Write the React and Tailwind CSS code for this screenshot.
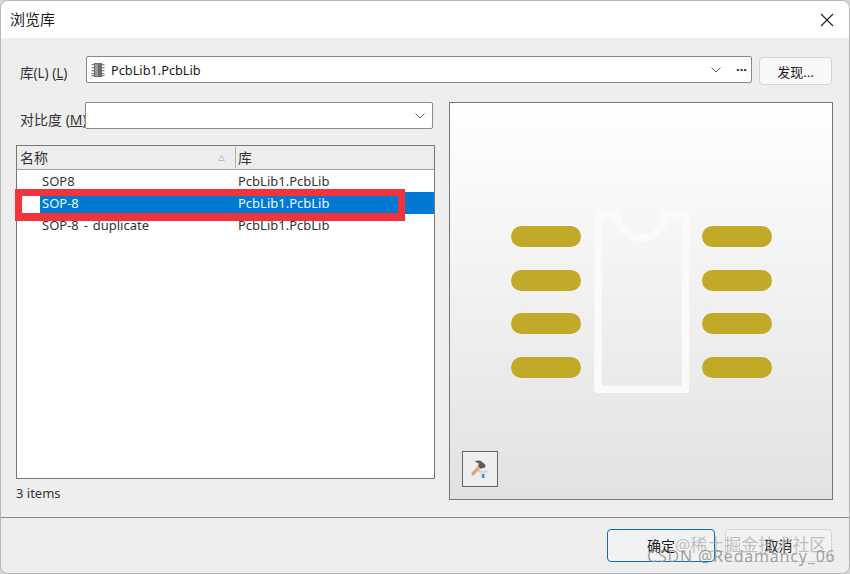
import React from "react";

const font = { fontFamily: '"Noto Sans", "Noto Sans CJK SC", sans-serif' };

function Chevron() {
  return (
    <svg width="10" height="6" viewBox="0 0 10 6" fill="none" stroke="#555" strokeWidth="1">
      <path d="M0.5 0.5 L5 5 L9.5 0.5" />
    </svg>
  );
}

function ChipIcon() {
  return (
    <svg width="14" height="16" viewBox="0 0 14 16">
      <rect x="3" y="1" width="8" height="14" fill="#6b6b6b" />
      <rect x="4" y="2" width="3" height="12" fill="#9a9a9a" />
      {[2, 5, 8, 11, 13].map((y) => (
        <g key={y}>
          <rect x="0.5" y={y} width="2.5" height="1.3" fill="#888" />
          <rect x="11" y={y} width="2.5" height="1.3" fill="#888" />
        </g>
      ))}
    </svg>
  );
}

function HammerIcon() {
  return (
    <svg width="18" height="18" viewBox="0 0 18 18">
      <path d="M0.5 13.5 L2 15.5 L9.5 8 L7.5 6 Z" fill="#e6a56e" stroke="#c07d4a" strokeWidth="0.5" />
      <path d="M3.5 1.5 Q7 0 10 1 L14.5 5 L14 8 L12.5 7.5 L10 9 L7 5.5 L8 3.8 Q6 2.4 3.5 1.5 Z" fill="#5c5c5c" />
      <path d="M7.5 11 H16.5 L13.5 13.5 V18 H10.8 V13.5 Z" fill="#dde4ec" stroke="#a9b8c8" strokeWidth="0.5" />
      <rect x="11" y="14" width="2.3" height="4" fill="#4d8fd0" />
    </svg>
  );
}

function SortMark() {
  return (
    <svg width="7" height="6" viewBox="0 0 7 6" fill="none" stroke="#b5b5b5" strokeWidth="0.8">
      <path d="M3.5 0.5 L6.5 5.5 H0.5 Z" />
    </svg>
  );
}

function Footprint() {
  const ys = [0, 44, 87, 131];
  return (
    <svg width="261" height="183" viewBox="0 0 261 183" fill="none">
      {ys.map((y) => (
        <g key={y}>
          <rect x="0" y={y + 16} width="70" height="21" rx="10.5" fill="#c2a928" />
          <rect x="191" y={y + 16} width="70" height="21" rx="10.5" fill="#c2a928" />
        </g>
      ))}
      <path
        d="M87 4 H106 A23 23 0 0 0 154 4 H174.5 V179.5 H87 Z"
        stroke="#fafafa"
        strokeWidth="7.5"
        strokeLinejoin="round"
      />
    </svg>
  );
}

function Row({ name, lib, selected }) {
  return (
    <div className={`flex h-[22px] items-center pt-[2px] text-[13px] ${selected ? "bg-[#0078d4] text-[#f2f8fd]" : "text-[#333333]"}`}>
      <div className="w-[219px] pl-[25px] whitespace-nowrap [word-spacing:1.5px]">{name}</div>
      <div className="flex-1 pl-[2px] whitespace-nowrap">{lib}</div>
    </div>
  );
}

export default function App() {
  return (
    <div className="relative w-[850px] h-[574px] overflow-hidden bg-[#d4d4d4] text-[#1a1a1a]" style={font}>
      <div className="flex flex-col h-[574px] rounded-lg overflow-hidden border border-[#b5b5b5] bg-[#eeeeee]">
        {/* title */}
        <div className="flex h-[37px] shrink-0 items-center justify-between bg-white pl-[9px] pr-[15px] text-[15px]">
          <span>浏览库</span>
          <svg width="14" height="14" viewBox="0 0 14 14" stroke="#222" strokeWidth="1.1">
            <path d="M1 1 L13 13 M13 1 L1 13" />
          </svg>
        </div>

        {/* library row */}
        <div className="flex shrink-0 items-start mt-[18px] pl-[19px] pr-[17px] h-[28px] text-[13px]">
          <span className="w-[66px] pt-[7px] text-[13.5px] whitespace-nowrap text-[#333333]">
            库(L) (<span className="underline">L</span>)
          </span>
          <div className="flex h-[27px] w-[666px] items-center rounded-[2px] border border-[#8a8a8a] bg-white pl-[4px] pr-[4px]">
            <ChipIcon />
            <span className="ml-[6px] flex-1 pt-[2px] text-[12.75px]">PcbLib1.PcbLib</span>
            <Chevron />
            <span className="ml-[15px] font-bold leading-none">···</span>
          </div>
          <button className="ml-[7px] mt-[1px] h-[28px] w-[73px] rounded-[4px] border border-[#d4d4d4] bg-[#f8f8f8] pt-[3px] text-[13px]">
            发现...
          </button>
        </div>

        {/* main */}
        <div className="flex flex-1 min-h-0 pl-[15px] pr-[16px] mt-[18px] gap-[14px]">
          <div className="flex w-[419px] flex-col">
            <div className="flex h-[28px] shrink-0 items-start text-[13px]">
              <span className="w-[69px] pl-[4px] pt-[7px] text-[14px] whitespace-nowrap text-[#333333]">
                对比度 (<span className="underline">M</span>)
              </span>
              <div className="flex h-[27px] w-[348px] items-center justify-end rounded-[2px] border border-[#8a8a8a] bg-white pr-[7px]">
                <Chevron />
              </div>
            </div>
            <div className="mt-[15px] flex h-[334px] shrink-0 flex-col border border-[#777777] bg-white">
              <div className="flex h-[24px] shrink-0 items-center border-b border-[#a0a0a0] bg-[#ededed] text-[14px] text-[#333333]">
                <div className="flex w-[219px] items-center justify-between border-r border-[#b0b0b0] pl-[3px] pr-[10px]">
                  <span>名称</span>
                  <SortMark />
                </div>
                <div className="pl-[2px]">库</div>
              </div>
              <Row name="SOP8" lib="PcbLib1.PcbLib" />
              <Row name="SOP-8" lib="PcbLib1.PcbLib" selected />
              <Row name="SOP-8 - duplicate" lib="PcbLib1.PcbLib" />
            </div>
            <div className="mt-[5px] h-[18px] shrink-0 text-[13px] leading-[18px] text-[#333333]">3 items</div>
          </div>

          {/* preview */}
          <div className="relative flex h-[398px] w-[384px] items-center justify-center border border-[#777777] bg-gradient-to-b from-white to-[#e2e2e2]">
            <Footprint />
            <div className="absolute left-[12px] bottom-[12px] flex h-[36px] w-[36px] items-center justify-center border border-[#666666] bg-[#eeeeee]">
              <HammerIcon />
            </div>
          </div>
        </div>

        {/* footer */}
        <div className="flex h-[56px] shrink-0 items-center justify-end gap-[10px] border-t border-[#8a8a8a] pr-[17px] mt-[16px] text-[14px]">
          <button className="h-[33px] w-[108px] rounded-[4px] border border-[#0f6cbd] bg-[#f2f2f2]">确定</button>
          <button className="h-[33px] w-[107px] rounded-[4px] border border-[#d4d4d4] bg-[#f2f2f2]">取消</button>
        </div>
      </div>

      {/* red annotation */}
      <div className="absolute left-[15px] top-[189px] h-[32px] w-[390px] border-[7px] border-b-[8px] border-[#f0343c]">
        <div className="h-full w-[18px] bg-white" />
      </div>

      {/* watermarks */}
      <span className="absolute left-[675px] top-[532px] whitespace-nowrap text-[17px] text-[#a8a8a8]/70">@稀土掘金技术社区</span>
      <span className="absolute left-[647px] top-[544px] whitespace-nowrap text-[16px] tracking-[0.8px] text-[#8c8c8c]/80">CSDN @Redamancy_06</span>
    </div>
  );
}
